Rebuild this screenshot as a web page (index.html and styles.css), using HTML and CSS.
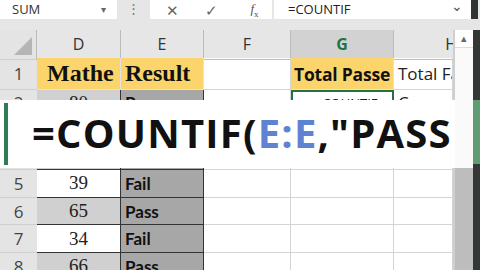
FILE: index.html
```html
<!DOCTYPE html>
<html lang="en">
<head>
    <meta charset="UTF-8">
    <title>COUNTIF</title>
    <link rel="stylesheet" href="styles.css">
</head>
<body>
    <div class="formula-bar">
        <div class="name-box">SUM <span class="drop">&#9662;</span></div>
        <div class="grip">&#8942;</div>
        <div class="fx-buttons">
            <span class="btn">&#10005;</span>
            <span class="btn">&#10003;</span>
            <span class="btn fx"><i>f</i><sub>x</sub></span>
        </div>
        <div class="formula-input">=COUNTIF <span class="chev">&#8964;</span></div>
        <div class="edge"></div>
    </div>

    <div class="sheet">
        <div class="grid">
            <div class="row head">
                <div class="rn corner"><span class="tri"></span></div>
                <div class="ch">D</div>
                <div class="ch">E</div>
                <div class="ch">F</div>
                <div class="ch sel">G</div>
                <div class="ch h">H</div>
            </div>
            <div class="row r1">
                <div class="rn">1</div>
                <div class="c yel serif-b first">Mathe</div>
                <div class="c yel serif-b">Result</div>
                <div class="c"></div>
                <div class="c yel sans-b">Total Passe</div>
                <div class="c sans">Total Fa</div>
            </div>
            <div class="row r2">
                <div class="rn">2</div>
                <div class="c num gray">80</div>
                <div class="c dk sans-b">Pass</div>
                <div class="c"></div>
                <div class="c active">=COUNTIF</div>
                <div class="c sans">C</div>
            </div>
            <div class="row r3">
                <div class="rn">3</div>
                <div class="c num">45</div>
                <div class="c dk sans-b">Fail</div>
                <div class="c"></div>
                <div class="c"></div>
                <div class="c"></div>
            </div>
            <div class="row r3">
                <div class="rn">4</div>
                <div class="c num gray">70</div>
                <div class="c dk sans-b">Pass</div>
                <div class="c"></div>
                <div class="c"></div>
                <div class="c"></div>
            </div>
            <div class="row data">
                <div class="rn">5</div>
                <div class="c num">39</div>
                <div class="c dk sans-b">Fail</div>
                <div class="c"></div>
                <div class="c"></div>
                <div class="c"></div>
            </div>
            <div class="row data">
                <div class="rn">6</div>
                <div class="c num gray">65</div>
                <div class="c dk sans-b">Pass</div>
                <div class="c"></div>
                <div class="c"></div>
                <div class="c"></div>
            </div>
            <div class="row data">
                <div class="rn">7</div>
                <div class="c num">34</div>
                <div class="c dk sans-b">Fail</div>
                <div class="c"></div>
                <div class="c"></div>
                <div class="c"></div>
            </div>
            <div class="row data">
                <div class="rn">8</div>
                <div class="c num gray">66</div>
                <div class="c dk sans-b">Pass</div>
                <div class="c"></div>
                <div class="c"></div>
                <div class="c"></div>
            </div>
        </div>
        <div class="vscroll">
            <div class="arrow">&#9652;</div>
            <div class="track"></div>
            <div class="thumb"></div>
        </div>
        <div class="edge"><div class="glow"></div></div>

        <div class="zoom-bar">
            <span class="mark"></span>
            <span class="big">=COUNTIF(<span class="ref">E:E</span>,"PASS</span>
        </div>
    </div>
</body>
</html>
```

FILE: styles.css
```css
* {
    margin: 0;
    padding: 0;
    box-sizing: border-box;
}

body {
    width: 480px;
    height: 270px;
    overflow: hidden;
    background: #e6e6e6;
    font-family: 'Open Sans', sans-serif;
    color: #222;
}

/* formula bar */
.formula-bar {
    display: flex;
    height: 30px;
    padding-bottom: 11px;
    background: #e6e6e6;
}

.name-box {
    width: 117px;
    background: #fff;
    font-size: 13px;
    line-height: 19px;
    padding-left: 12px;
    color: #333;
    position: relative;
}

.drop {
    position: absolute;
    left: 101px;
    top: 0;
    font-size: 10px;
    color: #666;
}

.grip {
    width: 33px;
    text-align: center;
    font-size: 13px;
    line-height: 17px;
    color: #777;
}

.fx-buttons {
    width: 124px;
    background: #fff;
    display: flex;
    align-items: center;
    padding-left: 14px;
    gap: 22px;
    border-right: 2px solid #e6e6e6;
}

.btn {
    font-size: 15px;
    color: #666;
    width: 17px;
    text-align: center;
}

.fx {
    font-family: 'Liberation Serif', serif;
    font-size: 13px;
    color: #555;
    margin-left: 4px;
}

.fx sub {
    font-size: 9px;
}

.formula-input {
    width: 197px;
    background: #fff;
    font-size: 13px;
    line-height: 19px;
    padding-left: 14px;
    position: relative;
}

.chev {
    position: absolute;
    right: 8px;
    top: -4px;
    font-size: 14px;
    color: #555;
}

.edge {
    width: 7px;
    background: #2f3430;
}

/* sheet */
.sheet {
    display: flex;
    height: 240px;
    position: relative;
}

.grid {
    width: 453px;
    background: #fff;
    overflow: hidden;
}

.row {
    display: grid;
    grid-template-columns: 37px 84px 83px 87px 103px 59px;
}

.head {
    height: 28px;
    background: #e6e6e6;
}

.r1 { height: 32px; }
.r2, .r3 { height: 26.7px; }
.data { height: 27.7px; }

.rn {
    background: #e4e4e4;
    border-bottom: 1px solid #cfcfcf;
    text-align: center;
    font-size: 17px;
    color: #444;
    display: flex;
    align-items: center;
    justify-content: center;
}

.corner {
    position: relative;
    border-right: 1px solid #bcbcbc;
}

.tri {
    position: absolute;
    right: 4px;
    bottom: 4px;
    border-left: 18px solid transparent;
    border-bottom: 18px solid #b5b5b5;
}

.ch {
    border-right: 1px solid #bcbcbc;
    text-align: center;
    font-size: 16px;
    line-height: 28px;
    color: #333;
    border-bottom: 1px solid #bcbcbc;
}

.ch.sel {
    background: #d2d2d2;
    color: #217346;
    font-weight: 700;
    border-bottom: 2px solid #217346;
}

.ch.h {
    text-align: right;
    margin-right: -4px;
    border-right: none;
}

.c {
    border-right: 1px solid #d4d4d4;
    border-bottom: 1px solid #d4d4d4;
    display: flex;
    align-items: center;
    overflow: hidden;
    white-space: nowrap;
    padding-left: 4px;
}

.yel {
    background: #fbd46b;
    border-color: #e2e2e2;
}

.serif-b {
    font-family: 'Liberation Serif', serif;
    font-weight: 700;
    font-size: 24px;
    color: #111;
}

.serif-b.first {
    padding-left: 10px;
}

.sans-b {
    font-family: 'Lato', sans-serif;
    font-weight: 700;
    font-size: 17px;
    color: #111;
}

.r1 .sans-b {
    font-family: 'Open Sans', sans-serif;
    font-size: 17.5px;
    padding-left: 3px;
    letter-spacing: -0.2px;
}

.sans {
    font-family: 'Open Sans', sans-serif;
    font-size: 17px;
    padding-left: 4px;
}

.num {
    justify-content: center;
    padding-left: 0;
    font-family: 'Liberation Serif', serif;
    font-size: 19px;
    background: #fff;
    border-color: #333;
}

.num.gray {
    background: #d0d0d0;
}

.dk {
    background: #a7a7a7;
    border-color: #333;
}

.active {
    border: 2px solid #217346;
    font-size: 13px;
    padding-left: 22px;
}

/* scrollbar */
.vscroll {
    width: 20px;
    display: flex;
    flex-direction: column;
    border-left: 2px solid #cfcfcf;
    background: #fff;
}

.arrow {
    height: 18px;
    text-align: center;
    font-size: 11px;
    line-height: 16px;
    color: #666;
    border-bottom: 1px solid #ddd;
}

.track {
    height: 120px;
    background: #fafafa;
}

.thumb {
    flex: 1;
    background: #bdbdbd;
}

.sheet .edge {
    position: relative;
    background: #333835;
}

.glow {
    position: absolute;
    left: 0;
    right: 0;
    top: 70px;
    height: 64px;
    background: #5f9b73;
}

/* zoomed formula */
.zoom-bar {
    position: absolute;
    left: 0;
    top: 70px;
    width: 455px;
    height: 68px;
    background: #fff;
    display: flex;
    align-items: center;
    overflow: hidden;
    white-space: nowrap;
}

.mark {
    width: 4px;
    height: 62px;
    margin-left: 4px;
    margin-right: 24px;
    background: #2f7d57;
}

.big {
    font-family: 'Open Sans', sans-serif;
    font-weight: 700;
    font-size: 40px;
    letter-spacing: 1.2px;
    color: #111;
    margin-top: -3px;
}

.ref {
    color: #5f83d2;
}
```
